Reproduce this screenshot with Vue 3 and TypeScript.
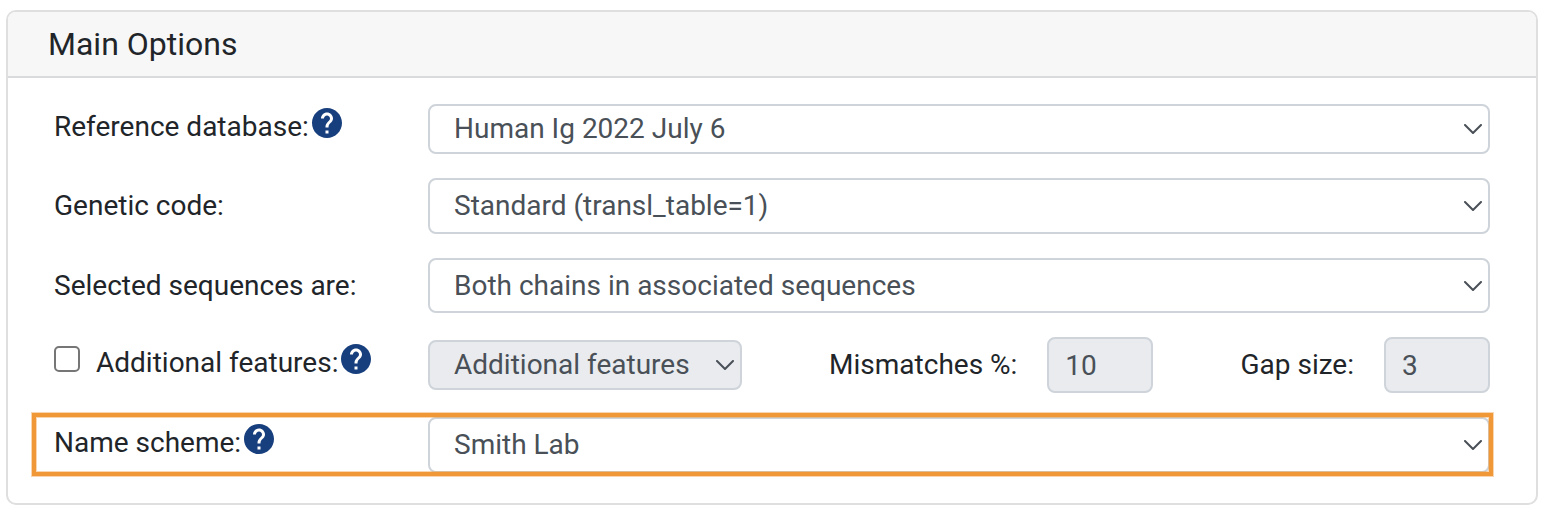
<script setup lang="ts">
import { ref } from 'vue'

interface SelectRow {
  id: string
  label: string
  value: string
  size: string
  help: boolean
}

const topRows = ref<SelectRow[]>([
  { id: 'reference-database', label: 'Reference database:', value: 'Human Ig 2022 July 6', size: 'compact', help: true },
  { id: 'genetic-code', label: 'Genetic code:', value: 'Standard (transl_table=1)', size: 'regular', help: false },
  { id: 'selected-sequences', label: 'Selected sequences are:', value: 'Both chains in associated sequences', size: 'medium', help: false },
])

const useFeatures = ref(false)
const mismatches = ref('10')
const gapSize = ref('3')
const helpPath =
  'M12 2C6.48 2 2 6.48 2 12s4.48 10 10 10 10-4.48 10-10S17.52 2 12 2zm1 17h-2v-2h2v2zm2.07-7.75l-.9.92C13.45 12.9 13 13.5 13 15h-2v-.5c0-1.1.45-2.1 1.17-2.83l1.24-1.26c.37-.36.59-.86.59-1.41 0-1.1-.9-2-2-2s-2 .9-2 2H8c0-2.21 1.79-4 4-4s4 1.79 4 4c0 .88-.36 1.68-.93 2.25z'
</script>

<template>
  <main class="page">
    <section class="card">
      <header class="card-header">
        <h1 class="title">Main Options</h1>
      </header>
      <form class="card-body" @submit.prevent>
        <div v-for="row in topRows" :key="row.id" class="row">
          <div class="caption" :class="{ 'with-help': row.help }">
            <label :for="row.id">{{ row.label }}</label>
            <button v-if="row.help" type="button" class="help" aria-label="Help">
              <svg viewBox="2 2 20 20" aria-hidden="true"><path :d="helpPath" /></svg>
            </button>
          </div>
          <div class="select">
            <select :id="row.id" class="control" :class="row.size">
              <option>{{ row.value }}</option>
            </select>
            <svg class="chevron" viewBox="0 0 18 10" aria-hidden="true"><path d="M1 1l8 8 8-8" /></svg>
          </div>
        </div>

        <div class="row">
          <div class="caption with-help">
            <input id="use-features" v-model="useFeatures" type="checkbox" class="check" />
            <label for="use-features">Additional features:</label>
            <button type="button" class="help" aria-label="Help">
              <svg viewBox="2 2 20 20" aria-hidden="true"><path :d="helpPath" /></svg>
            </button>
          </div>
          <div class="feature-fields">
            <div class="select feature-select">
              <select class="control compact" aria-label="Additional features" :disabled="!useFeatures">
                <option>Additional features</option>
              </select>
              <svg class="chevron" viewBox="0 0 18 10" aria-hidden="true"><path d="M1 1l8 8 8-8" /></svg>
            </div>
            <div class="number-field">
              <label for="mismatches">Mismatches %:</label>
              <input id="mismatches" v-model="mismatches" type="text" class="control regular number" :disabled="!useFeatures" />
            </div>
            <div class="number-field">
              <label for="gap-size">Gap size:</label>
              <input id="gap-size" v-model="gapSize" type="text" class="control regular number" :disabled="!useFeatures" />
            </div>
          </div>
        </div>

        <div class="row highlighted">
          <div class="caption with-help">
            <label for="name-scheme">Name scheme:</label>
            <button type="button" class="help" aria-label="Help">
              <svg viewBox="2 2 20 20" aria-hidden="true"><path :d="helpPath" /></svg>
            </button>
          </div>
          <div class="select">
            <select id="name-scheme" class="control regular">
              <option>Smith Lab</option>
            </select>
            <svg class="chevron" viewBox="0 0 18 10" aria-hidden="true"><path d="M1 1l8 8 8-8" /></svg>
          </div>
        </div>
      </form>
    </section>
  </main>
</template>

<style>
body {
  margin: 0;
  background: #fff;
}
</style>

<style scoped>
.page {
  padding: 10px 8px 9px 6px;
  font-family: Roboto, "Liberation Sans", sans-serif;
  font-size: 28px;
  line-height: 42px;
  color: #212529;
}

.page *,
.page *::after {
  box-sizing: border-box;
}

.card {
  border: 2px solid #dfdfdf;
  border-radius: 10px;
  background: #fff;
  overflow: hidden;
}

.card-header {
  padding: 12px 40px;
  border-bottom: 2px solid #d9dadb;
  background: #f7f7f7;
}

.title {
  margin: 0;
  font-size: 32px;
  font-weight: 400;
  line-height: 40px;
}

.card-body {
  display: flex;
  flex-direction: column;
  gap: 24px;
  padding: 26px 46px 30px;
}

.row {
  position: relative;
  display: grid;
  grid-template-columns: 374px minmax(0, 1fr);
  align-items: center;
}

.caption {
  display: flex;
  align-items: baseline;
  white-space: nowrap;
}

.caption.with-help {
  padding-bottom: 4px;
}

.help {
  align-self: center;
  width: 30px;
  height: 30px;
  margin: 0 0 8px 3px;
  padding: 0;
  border: 0;
  border-radius: 50%;
  background: none;
  cursor: pointer;
}

.help svg {
  display: block;
  width: 30px;
  height: 30px;
  fill: #183f7d;
}

.check {
  appearance: none;
  width: 26px;
  height: 26px;
  margin: 0 16px 0 0;
  border: 2px solid #767676;
  border-radius: 5px;
  background: #fff;
}

.check:checked {
  background: #183f7d;
}

.select {
  position: relative;
}

.control {
  display: block;
  width: 100%;
  margin: 0;
  border: 2px solid #ced4da;
  border-radius: 8px;
  background: #fff;
  color: #495057;
  font: inherit;
  appearance: none;
  opacity: 1;
}

select.control {
  padding: 0 32px 0 24px;
}

.control.compact {
  height: 50px;
}

.control.medium {
  height: 55px;
}

.control.regular {
  height: 56px;
}

.control:disabled {
  background: #e9ebef;
}

.chevron {
  position: absolute;
  top: 50%;
  right: 8px;
  width: 18px;
  height: 10px;
  margin-top: -5px;
  fill: none;
  stroke: #495057;
  stroke-width: 2;
  stroke-linecap: round;
  stroke-linejoin: round;
  pointer-events: none;
}

.feature-fields {
  display: flex;
  align-items: center;
  justify-content: space-between;
}

.feature-select {
  width: 314px;
}

.number-field {
  display: flex;
  align-items: center;
  gap: 30px;
}

.control.number {
  width: 106px;
  padding: 0 16px;
}

.highlighted::after {
  content: "";
  position: absolute;
  inset: -4px -3px -3px -22px;
  border: 4px solid #f09837;
  box-shadow: 0 0 0 1px #f0983766, inset 0 0 0 1px #f0983766;
  pointer-events: none;
}
</style>
